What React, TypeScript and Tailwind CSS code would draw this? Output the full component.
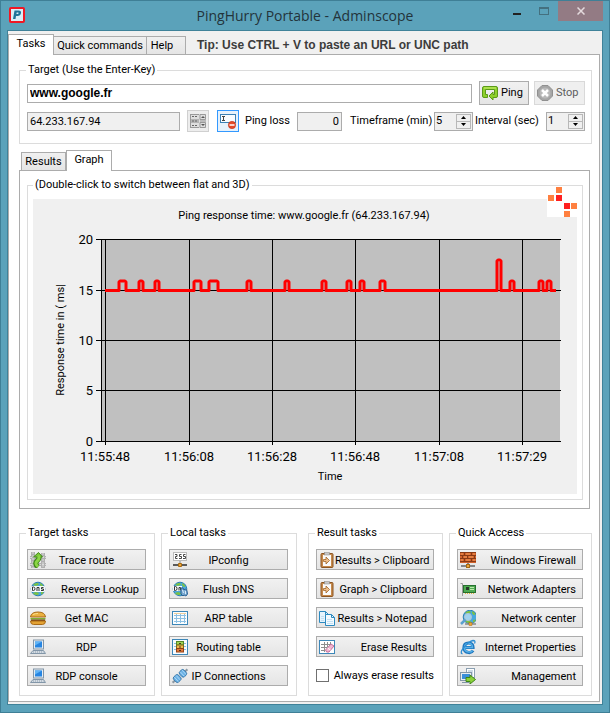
import { useState, type ReactNode } from 'react';

type IconName =
  | 'route' | 'dns' | 'burger' | 'pc' | 'ipconfig' | 'flush' | 'table' | 'routing' | 'plug'
  | 'clip' | 'copy' | 'erase' | 'firewall' | 'adapter' | 'center' | 'ie' | 'manage';

function Globe() {
  return (
    <>
      <circle cx="8" cy="8" r="6.800" fill="#4aa8de" stroke="#2b80b6" />
      <path d="M3 4q2-2.500 5-2l1 1.500-3 1.500zM10 2q3 1 3.500 3.500l-2 .500-1.500-2zM3 12l3-1 3 1-1 2q-4 0-5-2zM11 11l3-.500q-1 2.500-3 3z" fill="#7cc244" />
    </>
  );
}

const icons: Record<IconName, ReactNode> = {
  route: (
    <>
      <path d="M0 4h16v3H0zM0 11h16v3H0zM1 0h4v16H1zM11 1h4v15h-4z" fill="#b0b0b0" />
      <path d="M0 5.500h16M0 12.500h16M3 0v16M13 1v15" stroke="#dcdcdc" strokeDasharray="2 1" />
      <path d="M8 15Q4 11.500 7 9T8.500 4" fill="none" stroke="#3e8518" strokeWidth="5" />
      <path d="M3.500 5L8.500.500l4 4.500z" fill="#7cc937" stroke="#3e8518" />
      <path d="M8 14.500Q4.300 11.500 7.200 9T8.600 3.500" fill="none" stroke="#8bd645" strokeWidth="3" />
    </>
  ),
  dns: (
    <>
      <Globe />
      <rect x="1" y="5" width="14" height="6" rx="1" fill="#fff" opacity=".95" />
      <path d="M2.500 6v3.500h1q1.500 0 1.500-1.700T3.500 6zM7 10V6.500h2V10M13.500 6.500h-2V8h2v1.500h-2.500" fill="none" stroke="#333" />
    </>
  ),
  burger: (
    <>
      <path d="M.500 7Q1 2 8 2t7.500 5z" fill="#eab040" stroke="#a96b18" />
      <path d="M3 4.500Q5 3.500 8 3.500" fill="none" stroke="#fbe08d" />
      <path d="M.500 8h15v1.500H.500z" fill="#7fae32" />
      <path d="M1 9.500h14V11H1z" fill="#743a14" />
      <path d="M.500 11h15q0 3.500-3 3.500h-9q-3 0-3-3.500z" fill="#e3a233" stroke="#a96b18" />
    </>
  ),
  pc: (
    <>
      <rect x="3.500" y="1" width="10" height="9" fill="#e7edf2" stroke="#8296a8" />
      <rect x="5" y="2.500" width="7" height="6" fill="#2685e2" />
      <path d="M5 2.500h7l-7 4z" fill="#60b4f5" />
      <path d="M3 11.500h10.500l2 3H.500z" fill="#d4dce4" stroke="#8296a8" />
      <path d="M3 13h10.500" stroke="#8d9dab" strokeDasharray="1 1" />
    </>
  ),
  ipconfig: (
    <>
      <rect x="1.500" y=".500" width="13" height="8" fill="#fff" stroke="#bbb" />
      <path d="M3 2.500h2v2H3.500v2h2M9.500 2.500h-2v2h2v2h-2.500M13.500 2.500h-2v2h2v2H11" fill="none" stroke="#333" strokeWidth=".900" />
      <path d="M8 9v3" stroke="#888" />
      <path d="M1 13h14" stroke="#5a5a5a" strokeWidth="2" />
      <path d="M6.500 11.500h3v3h-3z" fill="#eda437" stroke="#a56a14" />
    </>
  ),
  flush: (
    <>
      <Globe />
      <path d="M1 5h9v5H1z" fill="#fff" opacity=".95" />
      <path d="M2.500 5.500v4h1q1.500 0 1.500-2t-1.500-2zM7 9.500v-3h1.500v3" fill="none" stroke="#333" />
      <path d="M9 8q0-2 2-1l1 2 1-1q2 0 2 2l.500 3-1.500 2-2-1-1 1-2-2z" fill="#79a9d1" stroke="#2d6293" />
      <path d="M10.500 9l1 3M13.500 10v3" stroke="#d9ecfa" />
    </>
  ),
  table: (
    <>
      <rect x=".500" y="1.500" width="15" height="13" fill="#fbfdfe" stroke="#3d87b8" />
      <path d="M2 5.500h12M2 8.500h12M2 11.500h12" stroke="#8dc0e3" />
      <path d="M4.500 4v9M8.500 4v9M12.500 4v9" stroke="#8dc0e3" />
      <path d="M2 3.500h12" stroke="#f0cf9c" />
    </>
  ),
  routing: (
    <>
      <rect x=".500" y=".500" width="15" height="15" fill="#f7fbfe" stroke="#3d87b8" />
      <rect x="4.500" y="2.500" width="7" height="3.500" fill="#9ed253" stroke="#55882a" />
      <rect x="4.500" y="6" width="7" height="3.500" fill="#efb84a" stroke="#7d6a1b" />
      <rect x="4.500" y="9.500" width="7" height="3.500" fill="#e57a3b" stroke="#914015" />
      <path d="M7 4.500h2M7 8h2M7 11.500h2" stroke="#463622" />
      <path d="M2 4.500h2M2 7.500h2M2 10.500h2M12 4.500h2M12 7.500h2M12 10.500h2" stroke="#89c0e2" />
    </>
  ),
  plug: (
    <g transform="rotate(-42 8 8)">
      <path d="M-2 8h3M15 8h3" stroke="#8b98a3" strokeWidth="2" />
      <rect x="1" y="4.500" width="6.500" height="7" rx="2" fill="#69b0e4" stroke="#2a6ca1" strokeWidth=".800" />
      <rect x="9" y="4.500" width="6" height="7" rx="2" fill="#69b0e4" stroke="#2a6ca1" strokeWidth=".800" />
      <path d="M3 5v6M5.500 5v6M11 5v6M13.500 5v6" stroke="#b5dcf7" strokeWidth=".800" />
    </g>
  ),
  clip: (
    <>
      <rect x="2" y="1.500" width="12" height="14" rx="1" fill="#c68a4c" stroke="#8b5522" />
      <rect x="4" y="3" width="8" height="11" fill="#fafafa" />
      <rect x="5.500" y=".500" width="5" height="2.500" fill="#c8c8c8" stroke="#888" strokeWidth=".500" />
      <path d="M4.500 7.500h2.500V5L10.500 8.500 7 12V9.500H4.500z" fill="#efc08c" stroke="#a06428" strokeWidth=".800" />
    </>
  ),
  copy: (
    <>
      <path d="M.500 1.500h6l3 3v8h-9z" fill="#e6f4fd" stroke="#2d8ac0" />
      <path d="M6.500 4.500h6l3 3v8h-9z" fill="#f4fafe" stroke="#2d8ac0" />
      <path d="M12.500 4.500v3h3M6.500 1.500v3" fill="none" stroke="#2d8ac0" />
      <path d="M8 9.500h5M8 11.500h6M8 13.500h6M2 6.500h3M2 8.500h3M2 10.500h3" stroke="#c3e1f4" />
    </>
  ),
  erase: (
    <>
      <rect x=".500" y="1.500" width="15" height="13" fill="#fff" stroke="#3d87b8" />
      <path d="M2 5.500h9M2 8.500h7M2 11.500h4M5.500 3v10M8.500 3v7M11.500 3v3" stroke="#8d8d8d" />
      <path d="M6.500 11l5.500-6 3 2-5 6q-3 1-3.500-2z" fill="#f4b5d1" stroke="#c0719a" />
      <path d="M8.500 9l3 2" stroke="#fff" />
    </>
  ),
  firewall: (
    <>
      <rect x="0" y="0" width="16" height="11" fill="#d2622b" />
      <path d="M0 .500h16M0 3.500h16M0 6.500h16M0 9.500h16M4.500 0v3M11.500 0v3M7.500 3v3M14.500 3v3M2.500 3v3M4.500 6v3M11.500 6v3" stroke="#8a3a14" />
      <path d="M1 2h2M6 2h4M13 2h2M4 5h3M9 5h4M1 8h2M6 8h4M13 8h2" stroke="#f59a58" />
      <path d="M8 11v2M1 14h14" stroke="#666" strokeWidth="1.500" />
      <rect x="6.500" y="12.500" width="3" height="3" fill="#eda437" stroke="#a56a14" />
    </>
  ),
  adapter: (
    <>
      <path d="M.500 2.500h2V15" fill="none" stroke="#9a9a9a" />
      <rect x="3.500" y="4.500" width="12" height="7" fill="#4fab52" stroke="#26702e" />
      <rect x="6" y="6" width="3" height="3" fill="#28382a" />
      <path d="M10 6.500h4M10 8.500h4" stroke="#bde8ac" />
      <path d="M5 12.500h9" stroke="#dcae3b" strokeDasharray="1 1" />
    </>
  ),
  center: (
    <>
      <g transform="translate(2 -1)">
        <Globe />
      </g>
      <circle cx="8" cy="7" r="3.500" fill="#d9effa" fillOpacity=".6" stroke="#b4c6d2" />
      <path d="M5.500 9.500L1 14" stroke="#5aa1d0" strokeWidth="2.500" />
      <path d="M5 14h11" stroke="#888" strokeWidth="1.500" />
      <rect x="9" y="12.500" width="3" height="3" fill="#eda437" stroke="#a56a14" strokeWidth=".500" />
    </>
  ),
  ie: (
    <>
      <path d="M13 11.500Q11.500 14 8.500 13.500 4 13 4 8.500 4 4 8.500 4t4.500 4.500H5" fill="none" stroke="#1d76be" strokeWidth="3.200" />
      <path d="M12.500 11.500Q11 13.500 8.500 13 4.500 12.500 4.500 8.500 4.500 4.500 8.500 4.500t4 4H5" fill="none" stroke="#58b0e8" strokeWidth="1.500" />
      <path d="M2.500 15q-3-1 1-6Q9 2 13 1.500q3 0 1.500 3" fill="none" stroke="#2e8ed3" strokeWidth="1.300" />
    </>
  ),
  manage: (
    <>
      <rect x="6.500" y=".500" width="8" height="9" fill="#fff" stroke="#8ba0b2" />
      <path d="M8 3h5M8 5h5M8 7h5" stroke="#9bb8cf" />
      <rect x=".500" y="4.500" width="11" height="8" fill="#e7edf2" stroke="#8296a8" />
      <rect x="2" y="6" width="8" height="5" fill="#3a8fda" />
      <path d="M2 14.500h7" stroke="#8296a8" />
      <path d="M6 9.500h4V7l5.500 4.500L10 16v-2.500H6z" fill="#8ad13b" stroke="#3f8618" />
    </>
  ),
};

function Icon({ name }: { name: IconName }) {
  return (
    <svg viewBox="0 0 16 16" className="h-4 w-4 shrink-0" aria-hidden="true">
      {icons[name]}
    </svg>
  );
}

type Task = { icon: IconName; label: string; right?: boolean };

const targetTasks: Task[] = [
  { icon: 'route', label: 'Trace route' },
  { icon: 'dns', label: 'Reverse Lookup', right: true },
  { icon: 'burger', label: 'Get MAC' },
  { icon: 'pc', label: 'RDP' },
  { icon: 'pc', label: 'RDP console' },
];

const localTasks: Task[] = [
  { icon: 'ipconfig', label: 'IPconfig' },
  { icon: 'flush', label: 'Flush DNS' },
  { icon: 'table', label: 'ARP table' },
  { icon: 'routing', label: 'Routing table' },
  { icon: 'plug', label: 'IP Connections' },
];

const resultTasks: Task[] = [
  { icon: 'clip', label: 'Results > Clipboard', right: true },
  { icon: 'clip', label: 'Graph > Clipboard', right: true },
  { icon: 'copy', label: 'Results > Notepad', right: true },
  { icon: 'erase', label: 'Erase Results', right: true },
];

const quickAccess: Task[] = [
  { icon: 'firewall', label: 'Windows Firewall', right: true },
  { icon: 'adapter', label: 'Network Adapters', right: true },
  { icon: 'center', label: 'Network center', right: true },
  { icon: 'ie', label: 'Internet Properties', right: true },
  { icon: 'manage', label: 'Management', right: true },
];

function TaskButton({ icon, label, right }: Task) {
  return (
    <button className="flex h-[21px] w-full items-center border border-[#acacac] bg-linear-to-b from-[#f1f1f1] to-[#e5e5e5] pl-[2px]">
      <Icon name={icon} />
      <span className={`flex-1 pt-[2px] whitespace-nowrap ${right ? 'pr-[6px] text-right' : 'pr-[18px] text-center'}`}>{label}</span>
    </button>
  );
}

function TaskGroup({ title, tasks, children }: { title: string; tasks: Task[]; children?: ReactNode }) {
  return (
    <fieldset className="min-w-0 border border-[#dcdcdc] px-[7px] pb-[9px]">
      <legend className="-ml-px px-[2px]">{title}</legend>
      <div className="flex flex-col gap-2 pt-2 pr-px">
        {tasks.map((task) => (
          <TaskButton key={task.label} {...task} />
        ))}
        {children}
      </div>
    </fieldset>
  );
}

function Spinner({ id, value, onChange }: { id: string; value: number; onChange: (n: number) => void }) {
  return (
    <div className="flex h-[19px] w-[39px] border border-[#acacac] bg-[#f0f0f0]">
      <input
        id={id}
        value={value}
        onChange={(e) => onChange(Number(e.target.value) || 1)}
        className="w-[21px] min-w-0 pl-[1px] outline-none"
      />
      <div className="flex w-[15px] flex-col py-px">
        <button aria-label="Increase" onClick={() => onChange(value + 1)} className="flex flex-1 items-center justify-center border border-[#b8b8b8]">
          <svg viewBox="0 0 5 3" className="h-[3px] w-[5px]"><path d="M2.500 0L5 3H0z" /></svg>
        </button>
        <button aria-label="Decrease" onClick={() => onChange(Math.max(1, value - 1))} className="flex flex-1 items-center justify-center border border-t-0 border-[#b8b8b8]">
          <svg viewBox="0 0 5 3" className="h-[3px] w-[5px]"><path d="M0 0h5L2.500 3z" /></svg>
        </button>
      </div>
    </div>
  );
}

// [start, end, top] of every spike on the response line
const spikes = [
  [86, 93, 82], [106, 110, 82], [122, 126, 82], [161, 168, 82], [176, 185, 82],
  [214, 218, 82], [252, 256, 82], [289, 293, 82], [314, 318, 82], [327, 331, 82],
  [347, 352, 82], [464, 468, 61], [477, 481, 82], [506, 510, 82], [514, 518, 82],
];

const line = 'M72 91.500' + spikes.map(([a, b, top]) => `H${a}V${top + 1}l1-1H${b - 1}l1 1V91.500`).join('') + 'H523';

const yTicks = [[20, 40], [15, 91], [10, 141], [5, 191], [0, 242]];
const xTicks: [string, number][] = [
  ['11:55:48', 72], ['11:56:08', 156], ['11:56:28', 239],
  ['11:56:48', 322], ['11:57:08', 406], ['11:57:29', 489],
];

function Chart() {
  return (
    <svg viewBox="0 0 544 295" className="block w-full bg-[#f0f0f0] font-[Roboto,'Liberation_Sans',sans-serif]" role="img" aria-label="Ping response time">
      <text x="271" y="20" textAnchor="middle" className="text-[11px]">Ping response time: www.google.fr (64.233.167.94)</text>
      <rect x="68" y="40" width="459" height="202" fill="#c0c0c0" />
      <g stroke="#000" shapeRendering="crispEdges">
        <path d="M68.500 40v202" />
        {yTicks.map(([v, y]) => <path key={v} d={`M63 ${y + 0.5}H528`} />)}
        {xTicks.map(([t, x]) => <path key={t} d={`M${x + 0.5} 40V246`} />)}
      </g>
      <g className="text-[13px]">
        {yTicks.map(([v, y]) => <text key={v} x="60" y={y + 5} textAnchor="end">{v}</text>)}
        {xTicks.map(([t, x]) => <text key={t} x={x} y="262" textAnchor="middle">{t}</text>)}
      </g>
      <path d={line} fill="none" stroke="#f00" strokeWidth="3" strokeLinejoin="round" />
      <text x="297" y="281" textAnchor="middle" className="text-[11px]">Time</text>
      <text transform="translate(31 141) rotate(-90)" textAnchor="middle" className="text-[11px]">Response time in ( ms|</text>
    </svg>
  );
}

export default function App() {
  const [host, setHost] = useState('www.google.fr');
  const [timeframe, setTimeframe] = useState(5);
  const [interval, setInterval] = useState(1);

  return (
    <div className="flex min-h-screen flex-col border border-[#3f7f96] bg-[#5ba2ba] font-[Roboto,'Liberation_Sans',sans-serif] text-[11px] leading-4 text-black">
      {/* Title bar */}
      <header className="grid h-[29px] grid-cols-[110px_1fr_110px]">
        <div className="pt-[6px] pl-2">
          <svg viewBox="0 0 16 16" className="h-4 w-4">
            <rect x="1" y="1" width="14" height="14" rx="1" fill="#d9eef7" stroke="#f01824" strokeWidth="2" />
            <path d="M5.500 3.500h4q3 0 2.500 2.500-.500 3-3.500 3H7L6.500 12H4zM7.700 5.500L7.400 7h1.200q.900 0 1-.800t-.600-.700z" fill="#1f7399" fillRule="evenodd" />
          </svg>
        </div>
        <h1 className="text-center font-['Open_Sans','Noto_Sans',sans-serif] text-[14px] leading-[29px] whitespace-nowrap text-[#23343b]">PingHurry Portable - Adminscope</h1>
        <div className="flex justify-end pr-[6px]">
          <button aria-label="Minimize" className="flex h-5 w-[26px] items-center justify-center pt-[5px]">
            <span className="h-[2px] w-2 bg-[#222]" />
          </button>
          <button aria-label="Maximize" className="flex h-5 w-[28px] items-center justify-center">
            <span className="h-2 w-[10px] border border-t-2 border-[#44707f]" />
          </button>
          <button aria-label="Close" className="flex h-5 w-[45px] items-center justify-center bg-[#937b84]">
            <svg viewBox="0 0 8 8" className="h-2 w-2"><path d="M.500.500l7 7M7.500.500l-7 7" stroke="#e4dadd" strokeWidth="1.500" /></svg>
          </button>
        </div>
      </header>

      <div className="mx-[6px] mb-[7px] flex-1 border border-[#3f8299] bg-[#f0f0f0] pb-[2px]">
        {/* Main tabs */}
        <div className="flex h-[23px] items-end">
          <div role="tablist" className="flex items-end">
            <button role="tab" aria-selected="true" className="relative -mb-px h-[21px] w-[46px] border border-b-0 border-[#acacac] bg-white pb-[2px]">Tasks</button>
            <button role="tab" aria-selected="false" className="h-[18px] w-[93px] border border-b-0 border-l-0 border-[#acacac] bg-linear-to-b from-[#f0f0f0] to-[#e5e5e5] whitespace-nowrap">Quick commands</button>
            <button role="tab" aria-selected="false" className="h-[18px] w-[39px] border border-b-0 border-l-0 border-[#acacac] bg-linear-to-b from-[#f0f0f0] to-[#e5e5e5] pr-2">Help</button>
          </div>
          <p className="mb-px ml-[11px] font-['Liberation_Sans',sans-serif] text-[12px] font-bold whitespace-nowrap text-[#3c3c3c]">Tip: Use CTRL + V to paste an URL or UNC path</p>
        </div>

        <main className="mr-[2px] border border-[#acacac] bg-white pt-[7px] pr-[7px] pb-[5px] pl-[10px]">
          <fieldset className="min-w-0 border border-[#dcdcdc] px-[6px] pb-[11px] pl-[7px]">
            <legend className="-ml-px px-[2px]">Target (Use the Enter-Key)</legend>
            <div className="flex items-center pt-[3px]">
              <input
                aria-label="Target"
                value={host}
                onChange={(e) => setHost(e.target.value)}
                className="h-[19px] min-w-0 flex-1 border border-[#acacac] bg-white px-[2px] font-['Liberation_Sans',sans-serif] text-[12px] font-bold"
              />
              <button className="ml-[7px] flex h-6 w-[50px] items-center gap-[3px] border border-[#acacac] bg-linear-to-b from-[#f1f1f1] to-[#e5e5e5] pl-[2px]">
                <svg viewBox="0 0 16 16" className="h-4 w-4 shrink-0">
                  <path d="M2 1.500h12q1.500 0 1.500 1.500v8q0 1.500-1.500 1.500h-3V15l-4-4 4-4v2.500h1.500v-5h-9v5h2v3H2Q.500 12.500 .500 11V3Q.500 1.500 2 1.500z" fill="#8ed02c" stroke="#5b9a18" />
                  <path d="M2 3h12" stroke="#c9f06f" />
                </svg>
                Ping
              </button>
              <button disabled className="ml-[5px] flex h-6 w-[51px] items-center gap-[3px] border border-[#d9d9d9] bg-[#efefef] pl-[2px] text-[#5c5c5c]">
                <svg viewBox="0 0 16 16" className="h-4 w-4 shrink-0">
                  <path d="M5 .500h6L15.500 5v6L11 15.500H5L.500 11V5z" fill="#a5a5a5" stroke="#909090" />
                  <circle cx="8" cy="8" r="5.500" fill="#b9b9b9" />
                  <path d="M5 5l6 6M11 5l-6 6" stroke="#fff" strokeWidth="2.500" />
                </svg>
                Stop
              </button>
            </div>
            <div className="flex items-center pt-[5px]">
              <input aria-label="IP address" readOnly value="64.233.167.94" className="h-[19px] min-w-0 flex-1 border border-[#acacac] bg-[#f0f0f0] px-[2px]" />
              <button disabled aria-label="Target list" className="ml-[7px] flex h-[22px] w-[22px] items-center justify-center border border-[#d0d0d0] bg-[#ededed]">
                <svg viewBox="0 0 16 16" className="h-4 w-4">
                  <path d="M0 1h16v14H0z" fill="#dedede" />
                  <path d="M0 6h9v4H0z" fill="#b4b4b4" />
                  <path d="M2 3.500h5M2 8h5M2 12.500h5" stroke="#666" strokeDasharray="2 1" />
                  <path d="M10 1.500h5.500v5H10zM10 9.500h5.500v5H10zM.500 1v14M0 14.500h9M0 1.500h9M10 8h6" fill="none" stroke="#999" />
                  <path d="M11 5l2-2 2 2zM11 11l2 2 2-2z" fill="#555" />
                </svg>
              </button>
              <button aria-label="Clear target" className="ml-2 flex h-[22px] w-[22px] items-center justify-center border border-[#3399ff] bg-[#e6f1fb]">
                <svg viewBox="0 0 16 16" className="h-4 w-4">
                  <rect x=".500" y="1.500" width="15" height="8" fill="#f8fcff" stroke="#3b81b5" />
                  <path d="M2 3.500h3M3.500 3.500v4M2 7.500h3" stroke="#444" />
                  <circle cx="12" cy="12" r="3.700" fill="#e44a28" stroke="#b82c12" strokeWidth=".500" />
                  <path d="M9.500 12h5" stroke="#fff" strokeWidth="1.500" />
                </svg>
              </button>
              <label htmlFor="loss" className="ml-[6px] w-[52px] whitespace-nowrap">Ping loss</label>
              <input id="loss" readOnly value="0" className="h-[19px] w-[45px] border border-[#acacac] bg-[#f0f0f0] pr-[2px] text-right" />
              <label htmlFor="timeframe" className="ml-2 w-[84px] whitespace-nowrap">Timeframe (min)</label>
              <Spinner id="timeframe" value={timeframe} onChange={setTimeframe} />
              <label htmlFor="interval" className="ml-[2px] w-[71px] whitespace-nowrap">Interval (sec)</label>
              <Spinner id="interval" value={interval} onChange={setInterval} />
            </div>
          </fieldset>

          {/* Results / Graph */}
          <div role="tablist" className="mt-[6px] flex items-end pl-[2px]">
            <button role="tab" aria-selected="false" className="h-[18px] w-[45px] border border-b-0 border-[#acacac] bg-linear-to-b from-[#f0f0f0] to-[#e5e5e5]">Results</button>
            <button role="tab" aria-selected="true" className="relative -mb-px h-[21px] w-[46px] border border-b-0 border-[#acacac] bg-white pb-[2px]">Graph</button>
          </div>
          <section className="mr-[2px] border border-[#acacac] pt-[6px] pr-[6px] pb-2 pl-[7px]">
            <fieldset className="relative min-w-0 border border-[#dcdcdc] px-[5px] pb-[5px]">
              <legend className="px-[2px]">(Double-click to switch between flat and 3D)</legend>
              <div className="pt-[6px]">
                <Chart />
              </div>
              <svg viewBox="0 0 30 30" className="absolute -top-[6px] right-[5px] h-[30px] w-[30px]" aria-hidden="true">
                <path d="M0 0h30v30H0z" fill="#fff" />
                <path d="M9 0h6v6H9zM1 8h6v6H1zM24 16h6v6h-6zM17 24h6v6h-6z" fill="#ff8040" />
                <path d="M9 8h6v6H9zM17 16h6v6h-6z" fill="#ff2020" />
              </svg>
            </fieldset>
          </section>

          <div className="mt-4 grid grid-cols-[278fr_284fr] gap-[11px]">
            <div className="grid grid-cols-2 gap-[6px]">
              <TaskGroup title="Target tasks" tasks={targetTasks} />
              <TaskGroup title="Local tasks" tasks={localTasks} />
            </div>
            <div className="grid grid-cols-[135fr_143fr] gap-[6px]">
              <TaskGroup title="Result tasks" tasks={resultTasks}>
                <label className="flex h-[21px] items-center gap-[5px] whitespace-nowrap">
                  <input type="checkbox" className="h-[13px] w-[13px] appearance-none border border-[#707070] bg-white checked:bg-[#3399ff]" />
                  Always erase results
                </label>
              </TaskGroup>
              <TaskGroup title="Quick Access" tasks={quickAccess} />
            </div>
          </div>
        </main>
      </div>
    </div>
  );
}
